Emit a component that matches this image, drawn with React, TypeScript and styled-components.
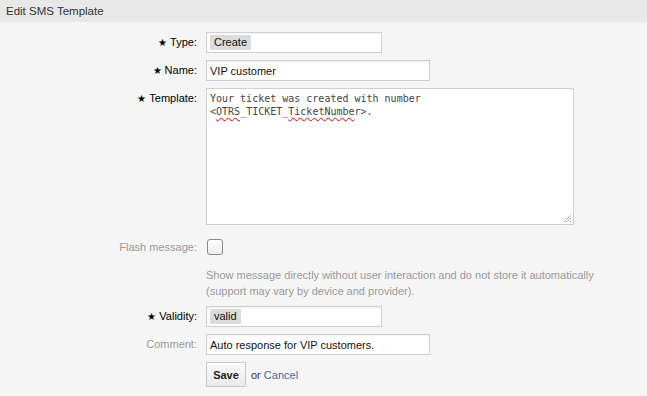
import styled, { createGlobalStyle } from "styled-components";

const Global = createGlobalStyle`
  html, body {
    margin: 0;
    padding: 0;
    background: #f5f5f5;
  }
  body {
    font-family: "Liberation Sans", Arial, sans-serif;
    font-size: 12px;
    color: #333;
  }
`;

const Header = styled.div`
  height: 22px;
  background: #e8e8e8;
  padding: 0 6px;
  display: flex;
  align-items: center;
  font-size: 11.5px;
  color: #333;
`;

const Form = styled.div`
  display: grid;
  grid-template-columns: 197px 1fr;
  column-gap: 9px;
  padding-top: 10px;
`;

const Label = styled.div<{ $optional?: boolean; $top?: number }>`
  text-align: right;
  font-size: 11px;
  color: ${(p) => (p.$optional ? "#999" : "#000")};
  padding-top: ${(p) => p.$top ?? 4}px;
`;

const Star = styled.span`
  font-size: 10px;
  margin-right: 3px;
`;

const Field = styled.div<{ $mb?: number }>`
  margin-bottom: ${(p) => p.$mb ?? 7}px;
`;

const Input = styled.div<{ $w: number }>`
  box-sizing: border-box;
  width: ${(p) => p.$w}px;
  height: 21px;
  background: #fff;
  border: 1px solid #cfcfcf;
  box-shadow: inset 0 1px 2px rgba(0, 0, 0, 0.06);
  display: flex;
  align-items: center;
  padding: 0 3px;
  font-size: 11px;
  color: #111;
`;

const Tag = styled.span`
  background: #dcdcdc;
  padding: 1px 4px 2px;
  line-height: 12px;
`;

const TextArea = styled.div`
  position: relative;
  box-sizing: border-box;
  width: 368px;
  height: 137px;
  background: #fff;
  border: 1px solid #cfcfcf;
  padding: 3px 3px;
  font-family: "DejaVu Sans Mono", "Liberation Mono", monospace;
  font-size: 10px;
  line-height: 13px;
  color: #444;
  white-space: pre-wrap;
`;

const Misspelled = styled.span`
  text-decoration: underline wavy #e00;
  text-decoration-thickness: 1px;
  text-underline-offset: 2px;
`;

const Grip = styled.svg`
  position: absolute;
  right: 1px;
  bottom: 1px;
`;

const Checkbox = styled.div`
  box-sizing: border-box;
  width: 16px;
  height: 16px;
  margin: 14px 0 0 1px;
  border: 1px solid #8a8a8a;
  border-radius: 3px;
  background: linear-gradient(#fdfdfd, #ececec);
`;

const Help = styled.div`
  grid-column: 2;
  font-size: 11px;
  line-height: 16px;
  color: #999;
  margin: 12px 0 7px;
`;

const Actions = styled.div`
  display: flex;
  align-items: center;
  gap: 5px;
  font-size: 11px;
  color: #333;
`;

const Button = styled.button`
  box-sizing: border-box;
  width: 40px;
  height: 25px;
  padding: 0;
  border: 1px solid #c8c8c8;
  background: linear-gradient(#fafafa, #eaeaea);
  font-family: "Liberation Sans", Arial, sans-serif;
  font-size: 11px;
  font-weight: bold;
  color: #222;
`;

const Link = styled.a`
  color: #3f6e96;
  text-decoration: none;
`;

function Req({ children }: { children: string }) {
  return (
    <Label>
      <Star>★</Star>
      {children}
    </Label>
  );
}

export default function App() {
  return (
    <>
      <Global />
      <Header>Edit SMS Template</Header>
      <Form>
        <Req>Type:</Req>
        <Field>
          <Input $w={176}>
            <Tag>Create</Tag>
          </Input>
        </Field>

        <Req>Name:</Req>
        <Field>
          <Input $w={224}>VIP customer</Input>
        </Field>

        <Req>Template:</Req>
        <Field $mb={0}>
          <TextArea>
            Your ticket was created with number{"\n"}&lt;
            <Misspelled>OTRS</Misspelled>_TICKET_
            <Misspelled>TicketNumbe</Misspelled>r&gt;.
            <Grip width="10" height="10" viewBox="0 0 10 10">
              <path d="M9 2 L2 9 M9 5 L5 9 M9 8 L8 9" stroke="#aaa" strokeWidth="1" />
            </Grip>
          </TextArea>
        </Field>

        <Label $optional $top={16}>
          Flash message:
        </Label>
        <Field $mb={0}>
          <Checkbox />
        </Field>
        <Help>
          Show message directly without user interaction and do not store it automatically
          <br />
          (support may vary by device and provider).
        </Help>

        <Req>Validity:</Req>
        <Field>
          <Input $w={176}>
            <Tag>valid</Tag>
          </Input>
        </Field>

        <Label $optional>Comment:</Label>
        <Field>
          <Input $w={224}>Auto response for VIP customers.</Input>
        </Field>

        <div />
        <Actions>
          <Button>Save</Button>
          <span>
            or <Link href="#">Cancel</Link>
          </span>
        </Actions>
      </Form>
    </>
  );
}
